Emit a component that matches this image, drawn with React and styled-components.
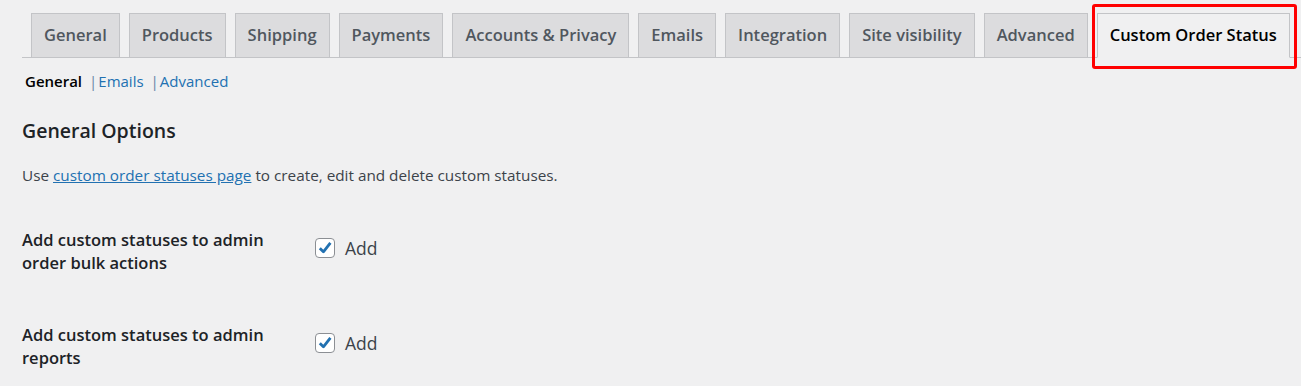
import React, {useState} from 'react'
import styled, {createGlobalStyle} from 'styled-components'

const GlobalStyle = createGlobalStyle`
    html, body {
        margin: 0;
        padding: 0;
        background: #f0f0f1;
        overflow: hidden;
    }
    body {
        font-family: "Open Sans", "Noto Sans", sans-serif;
        color: #3c434a;
    }
`

const tabs = ['General','Products','Shipping','Payments','Accounts & Privacy','Emails','Integration','Site visibility','Advanced','Custom Order Status']
const sections = ['General','Emails','Advanced']

function App() {
    const [Active, setActive] = useState('Custom Order Status')
    const [Section, setSection] = useState('General')
    const [Bulk, setBulk] = useState(true)
    const [Reports, setReports] = useState(true)

    return (
        <Wrapper>
            <GlobalStyle/>
            <TabBar>
                {tabs.map((t)=>(
                    <Tab key={t} active={t===Active} onClick={()=>setActive(t)}>
                        {t}
                        {t==='Custom Order Status' && <Highlight/>}
                    </Tab>
                ))}
            </TabBar>

            <SubNav>
                {sections.map((s,i)=>(
                    <SubItem key={s}>
                        {i>0 && <Sep>|</Sep>}
                        <SubLink current={s===Section} onClick={()=>setSection(s)}>{s}</SubLink>
                    </SubItem>
                ))}
            </SubNav>

            <Title>General Options</Title>
            <Description>
                Use <a href="#statuses">custom order statuses page</a> to create, edit and delete custom statuses.
            </Description>

            <FormTable>
                <Row>
                    <Label>Add custom statuses to admin order bulk actions</Label>
                    <Field>
                        <Check checked={Bulk} onChange={()=>setBulk(!Bulk)}/>
                        <span>Add</span>
                    </Field>
                </Row>
                <Row>
                    <Label>Add custom statuses to admin reports</Label>
                    <Field>
                        <Check checked={Reports} onChange={()=>setReports(!Reports)}/>
                        <span>Add</span>
                    </Field>
                </Row>
            </FormTable>
        </Wrapper>
    )
}

function Check({checked,onChange}) {
    return (
        <Box onClick={onChange}>
            {checked && (
                <svg width="20" height="20" viewBox="0 0 20 20">
                    <path d="M4.8 10.2 L8.4 13.8 L15.4 4.8" fill="none" stroke="#2271b1" strokeWidth="2.8" strokeLinejoin="round"/>
                </svg>
            )}
        </Box>
    )
}

const Wrapper=styled.div`
    padding: 13px 0 0 22px;
    width: 1279px;
`

const TabBar=styled.nav`
    display: flex;
    align-items: flex-end;
    border-bottom: 1px solid #c3c4c7;
    width: 1279px;
    height: 44px;
`

const Tab=styled.a`
    position: relative;
    box-sizing: border-box;
    height: 45px;
    margin-left: 9px;
    margin-bottom: -1px;
    padding: 0 12px 2px;
    display: flex;
    align-items: center;
    font-size: 16.5px;
    font-weight: 600;
    white-space: nowrap;
    cursor: pointer;
    border: 1px solid #c3c4c7;
    border-bottom-color: ${p=>p.active ? '#f0f0f1' : '#c3c4c7'};
    background: ${p=>p.active ? '#f0f0f1' : '#dcdcde'};
    color: ${p=>p.active ? '#000' : '#50575e'};
`

const Highlight=styled.span`
    position: absolute;
    left: -6px;
    right: -8px;
    top: -10px;
    bottom: -12px;
    border: 3px solid #ff0000;
    border-radius: 3px;
    pointer-events: none;
`

const SubNav=styled.ul`
    display: flex;
    list-style: none;
    margin: 12px 0 0 3px;
    padding: 0;
    font-size: 15px;
    line-height: 22px;
`

const SubItem=styled.li`
    display: flex;
    margin-right: 7px;
`

const Sep=styled.span`
    color: #6584a6;
    margin-right: 1px;
`

const SubLink=styled.a`
    cursor: pointer;
    color: ${p=>p.current ? '#000' : '#2271b1'};
    font-weight: ${p=>p.current ? 600 : 400};
`

const Title=styled.h2`
    margin: 25px 0 0;
    font-size: 19.5px;
    font-weight: 600;
    color: #1d2327;
    line-height: 28px;
`

const Description=styled.p`
    margin: 19px 0 0;
    font-size: 15.3px;
    line-height: 22px;
    color: #3c434a;
    a {
        color: #2271b1;
        text-decoration: underline;
    }
`

const FormTable=styled.div`
    margin-top: 42px;
`

const Row=styled.div`
    display: grid;
    grid-template-columns: 293px 1fr;
    min-height: 95px;
    &:last-child {
        min-height: 0;
    }
`

const Label=styled.div`
    width: 260px;
    font-size: 16.5px;
    font-weight: 600;
    line-height: 23px;
    color: #1d2327;
`

const Field=styled.label`
    display: flex;
    align-items: center;
    gap: 10px;
    height: 20px;
    margin-top: 10px;
    font-size: 17.5px;
    color: #3c434a;
`

const Box=styled.span`
    box-sizing: border-box;
    width: 20px;
    height: 20px;
    border: 1px solid #8c8f94;
    border-radius: 4px;
    background: #fff;
    display: flex;
    align-items: center;
    justify-content: center;
    cursor: pointer;
    svg {
        flex: none;
    }
`

export default App
